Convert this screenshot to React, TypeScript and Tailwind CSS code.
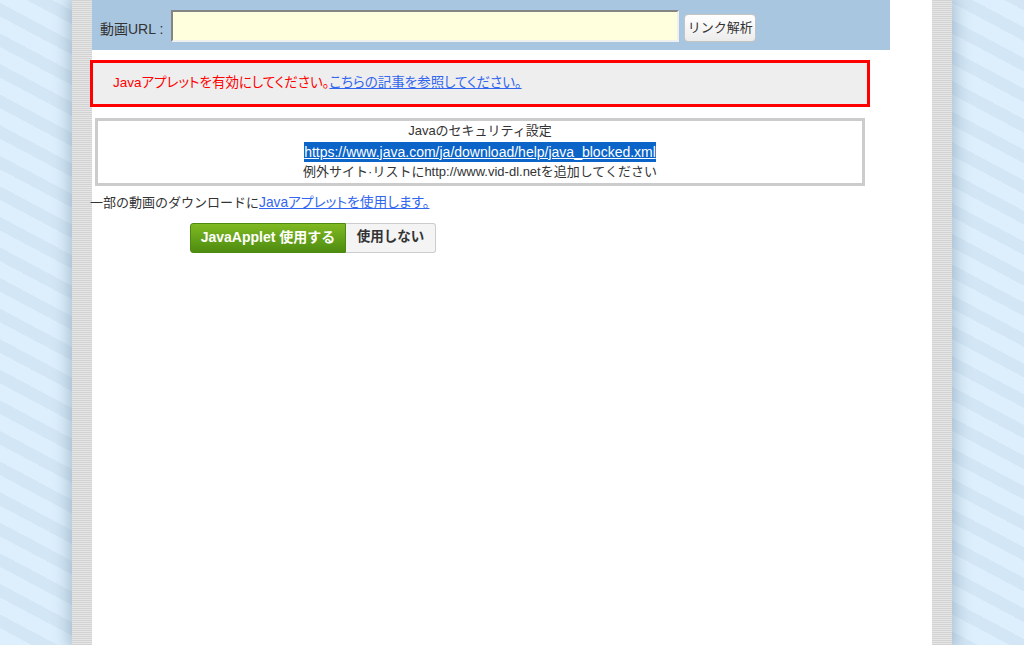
import React from "react";

export default function App() {
  return (
    <div
      className="min-h-screen w-full bg-[repeating-linear-gradient(28deg,#ddeffc_0px,#ddeffc_15px,#d3e6f5_15px,#d3e6f5_27px)] text-[#333] [font-family:'Liberation_Sans','Noto_Sans_CJK_JP',sans-serif]"
    >
      <div className="mx-auto flex min-h-screen w-[880px] bg-[repeating-linear-gradient(to_bottom,#d2d2d2_0px,#d2d2d2_1px,#e6e6e6_1px,#e6e6e6_2px)] px-[20px] shadow-[0_0_14px_4px_rgba(110,140,165,0.45)]">
        <div className="flex w-full flex-col bg-white">
          {/* header */}
          <div className="flex h-[50px] w-[798px] items-start bg-[#a9c6e0] pl-[8px]">
            <span className="mt-[19px] text-[14px] leading-[20px] text-[#333]">動画URL :</span>
            <input
              type="text"
              className="ml-[8px] mt-[10px] h-[32px] w-[508px] border-2 border-t-[#858585] border-l-[#858585] border-b-[#f0f0f0] border-r-[#f0f0f0] bg-[#ffffdd] outline-none"
            />
            <button className="ml-[5px] mt-[14px] h-[28px] w-[72px] rounded-[4px] border border-[#c4c4c4] bg-[linear-gradient(#ffffff,#ececec)] text-[13px] text-[#333]">
              リンク解析
            </button>
          </div>

          {/* warning */}
          <div className="ml-[-2px] mt-[10px] flex h-[47px] w-[780px] items-center border-[3px] border-[#ff0000] bg-[#eeeeee] pl-[20px] text-[13.5px] [font-feature-settings:'palt']">
            <span className="text-[#ff0000]">Javaアプレットを有効にしてください。</span>
            <a href="#" className="text-[#3366ee] underline">
              こちらの記事を参照してください。
            </a>
          </div>

          {/* security */}
          <div className="ml-[3px] mt-[11px] flex w-[770px] flex-col items-center border-[3px] border-[#cccccc] text-[13px] leading-[20.5px]">
            <span>Javaのセキュリティ設定</span>
            <a href="#" className="bg-[#0b64c8] text-[14px] leading-[20.5px] text-white underline">
              https://www.java.com/ja/download/help/java_blocked.xml
            </a>
            <span>例外サイト·リストにhttp://www.vid-dl.netを追加してください</span>
          </div>

          <div className="ml-[-2px] mt-[7px] text-[13px] leading-[20px]">
            一部の動画のダウンロードに
            <a href="#" className="text-[13.75px] text-[#3366ee] underline [font-feature-settings:'palt']">
              Javaアプレットを使用します。
            </a>
          </div>

          <div className="ml-[98px] mt-[10px] flex h-[30px]">
            <button className="h-full w-[156px] rounded-l-[3px] border border-[#4d8a12] bg-[linear-gradient(#7fb922,#4e8c10)] text-[14px] font-bold text-white">
              JavaApplet 使用する
            </button>
            <button className="h-full w-[90px] rounded-r-[3px] border border-l-0 border-[#cccccc] bg-[#f4f4f4] text-[13.5px] font-bold text-[#333]">
              使用しない
            </button>
          </div>
        </div>
      </div>
    </div>
  );
}
